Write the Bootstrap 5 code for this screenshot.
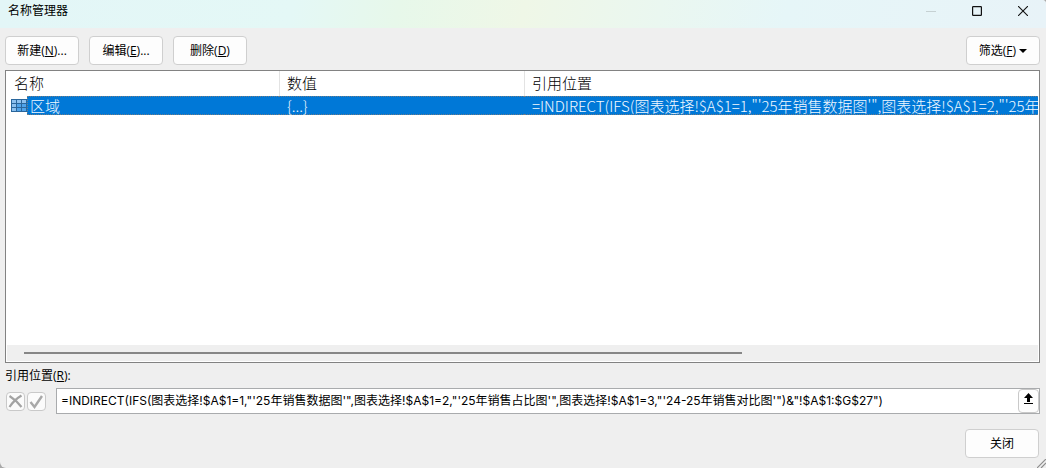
<!DOCTYPE html>
<html lang="zh-CN">
<head>
<meta charset="utf-8">
<meta name="viewport" content="width=device-width, initial-scale=1">
<title>名称管理器</title>
<link href="https://cdn.jsdelivr.net/npm/bootstrap@5.3.0/dist/css/bootstrap.min.css" rel="stylesheet">
<style>
body { background: #a8a8a8; color: #000; font: 12px/18px "Open Sans", "Noto Sans CJK SC", sans-serif; }
.dialog-window { background: #efefef; border-radius: 0 4px 0 6px; }
.title-bar { height: 28px; background: linear-gradient(100deg, #e3f6f7 0%, #e4f8f6 28%, #e7f8ea 38%, #eff7e7 50%, #eaf7f0 63%, #e6f6f8 75%, #e8f3f8 100%); }
.title-bar h1 { font-size: 12px; line-height: 22px; }
.caption-btn { width: 46px; height: 22px; background: none; color: #111; }
.caption-btn:disabled { color: #b5bfc0; }
.dialog-body { padding: 8px 6px 10px 5px; }
.tool-row { gap: 10px; margin-bottom: 5px; }
.dlg-btn { width: 74px; height: 29px; background: #fdfdfd; border: 1px solid #cfcfcf; border-radius: 4px; color: #000; font-size: 12px; line-height: 18px; padding: 0; }
.dlg-btn:hover { background: #f3f8fd; }
.arrow-down { width: 8px; height: 4px; }
.name-list { border: 1px solid #828282; background: #fff; }
.list-view { padding-right: 1px; }
.name-table { table-layout: fixed; font-family: "Noto Sans CJK SC", sans-serif; font-size: 15px; line-height: 18px; border-collapse: separate; border-spacing: 0; }
.name-table th, .name-table td { padding: 0 0 0 7px; font-weight: 300; white-space: nowrap; text-align: left; }
.name-table th { height: 25px; color: #000; border-left: 1px solid #e3e3e3; padding-bottom: 1px; }
.name-table th:first-child { border-left: 0; padding-left: 8px; }
.name-table td { height: 19px; background: #0078d7; color: #f2f9ff; border: 1px dotted #6f7c86; border-width: 1px 0; line-height: 17px; padding-left: 8px; }
.name-table td:last-child { overflow: hidden; }
.name-table td.icon-cell { background: #fff; border: 0; padding: 0 0 0 5px; line-height: 0; }
.name-table td.name-cell { border-left-width: 1px; padding-left: 2px; }
.c-icon { width: 21px; }
.c-name { width: 252px; }
.c-value { width: 245px; }
.scroll-strip { height: 17px; margin: 0 1px; padding: 0 17px; background: #efefef; border-bottom: 1px solid #fff; }
.scroll-thumb { width: 72%; height: 2px; background: #868686; }
.ref-label { line-height: 16px; padding-top: 5px; }
.mini-group { gap: 2px; margin: 0 10px 0 1px; }
.mini-btn, .mini-btn:disabled { width: 19px; height: 19px; border: 1px solid #c9c9c9; border-radius: 4px; background: #fbfbfb; padding: 0; line-height: 0; opacity: 1; }
.ref-box { height: 26px; border: 1px solid #a9abad; background: #fff; }
.ref-box input { font-family: Inter, "Noto Sans CJK SC", sans-serif; font-size: 12px; line-height: 18px; padding: 0 0 0 4px; background: none; color: #000; outline: 0; }
.pick-btn { width: 21px; height: 24px; border: 1px solid #c9c9c9; border-radius: 4px; background: #fdfdfd; padding: 0 0 4px; line-height: 0; }
.close-row { padding: 15px 1px 0 0; }
.size-grip { right: 0; bottom: 0; }
</style>
</head>
<body>
<main class="dialog-window d-flex flex-column vh-100 position-relative overflow-hidden">
  <header class="title-bar d-flex align-items-start ps-2">
    <h1 class="m-0 fw-normal flex-grow-1">名称管理器</h1>
    <button class="caption-btn btn border-0 p-0 d-flex align-items-center justify-content-center" aria-label="最小化" disabled><svg width="10" height="10" viewBox="0 0 10 10"><path d="M0 5.5h10" stroke="currentColor"/></svg></button>
    <button class="caption-btn btn border-0 p-0 d-flex align-items-center justify-content-center" aria-label="最大化"><svg width="10" height="10" viewBox="0 0 10 10"><rect x=".6" y=".6" width="8.8" height="8.8" rx=".6" fill="none" stroke="currentColor" stroke-width="1.2"/></svg></button>
    <button class="caption-btn btn border-0 p-0 d-flex align-items-center justify-content-center" aria-label="关闭窗口"><svg width="10" height="10" viewBox="0 0 10 10"><path d="M0 0l10 10M10 0L0 10" stroke="currentColor" stroke-width="1.1"/></svg></button>
  </header>

  <div class="dialog-body d-flex flex-column flex-grow-1">
    <div class="tool-row d-flex">
      <button class="dlg-btn btn">新建(<u>N</u>)...</button>
      <button class="dlg-btn btn">编辑(<u>E</u>)...</button>
      <button class="dlg-btn btn">删除(<u>D</u>)</button>
      <button class="dlg-btn btn ms-auto">筛选(<u>F</u>) <svg class="arrow-down align-middle" viewBox="0 0 8 4"><path d="M0 0h8L4 4z"/></svg></button>
    </div>

    <div class="name-list d-flex flex-column flex-grow-1">
      <div class="list-view flex-grow-1 overflow-hidden">
        <table class="name-table w-100">
          <colgroup><col class="c-icon"><col class="c-name"><col class="c-value"><col></colgroup>
          <thead><tr><th colspan="2">名称</th><th>数值</th><th>引用位置</th></tr></thead>
          <tbody><tr>
            <td class="icon-cell"><svg width="16" height="13" viewBox="0 0 16 13"><path d="M0 0h16v13H0z" fill="#2a669c"/><path d="M1 1h4v3H1zM6 1h4v3H6zM11 1h4v3h-4zM1 5h4v3H1zM1 9h4v3H1z" fill="#8cc0ee"/><path d="M6 5h4v3H6zM11 5h4v3h-4zM6 9h4v3H6zM11 9h4v3h-4z" fill="#4fa3ea"/></svg></td>
            <td class="name-cell">区域</td>
            <td>{...}</td>
            <td>=INDIRECT(IFS(图表选择!$A$1=1,"'25年销售数据图'",图表选择!$A$1=2,"'25年销售占比图'",图表选择!$A$1=3,"'24-25年销售对比图'")&amp;"!$A$1:$G$27")</td>
          </tr></tbody>
        </table>
      </div>
      <div class="scroll-strip d-flex align-items-center"><div class="scroll-thumb"></div></div>
    </div>

    <div class="ref-label"><label for="refers-to">引用位置(<u>R</u>):</label></div>
    <div class="d-flex align-items-center mt-1">
      <div class="mini-group d-flex">
        <button class="mini-btn btn" aria-label="取消" disabled><svg width="15" height="15" viewBox="0 0 15 15"><path d="M1.500 2Q8 6 13.500 13M13.500 1.500Q6 6 1.500 13" fill="none" stroke="#a3a3a3" stroke-width="2.200"/></svg></button>
        <button class="mini-btn btn" aria-label="确认" disabled><svg width="15" height="15" viewBox="0 0 15 15"><path d="M1.500 8l4 5L13 2" fill="none" stroke="#a8a8a8" stroke-width="2.400"/></svg></button>
      </div>
      <div class="ref-box d-flex align-items-center flex-grow-1">
        <input class="border-0 flex-grow-1" id="refers-to" type="text" value="=INDIRECT(IFS(图表选择!$A$1=1,&quot;'25年销售数据图'&quot;,图表选择!$A$1=2,&quot;'25年销售占比图'&quot;,图表选择!$A$1=3,&quot;'24-25年销售对比图'&quot;)&amp;&quot;!$A$1:$G$27&quot;)">
        <button class="pick-btn btn" aria-label="选择区域"><svg width="11" height="12" viewBox="0 0 11 12"><path d="M5.500 0L10 5H7v4H4V5H1zM1 10h9v1H1z"/></svg></button>
      </div>
    </div>
    <div class="close-row d-flex justify-content-end"><button class="dlg-btn btn">关闭</button></div>
  </div>
  <svg class="size-grip position-absolute" width="9" height="9" viewBox="0 0 9 9"><path d="M0 9L9 0M4 9l5-5" stroke="#8d8d8d" stroke-width="1.200"/></svg>
</main>
<script src="https://cdn.jsdelivr.net/npm/bootstrap@5.3.0/dist/js/bootstrap.bundle.min.js"></script>
</body>
</html>
